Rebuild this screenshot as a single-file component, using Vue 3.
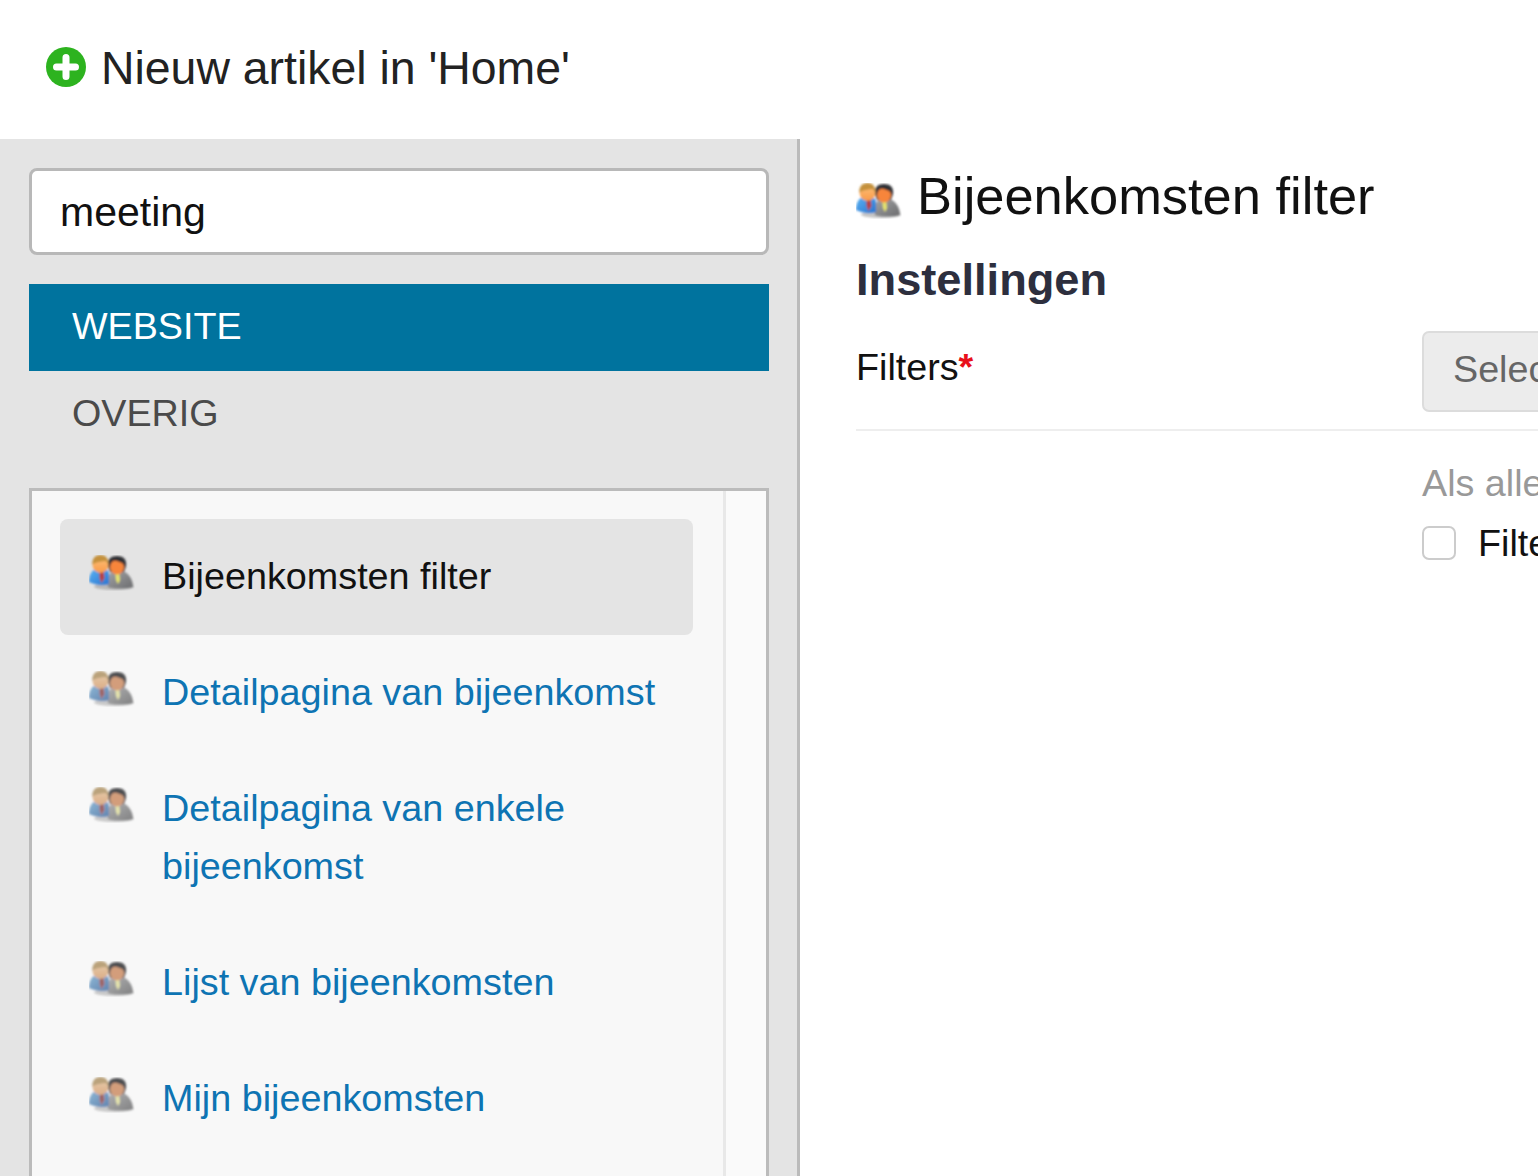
<template>
  <div class="page">
    <svg class="defs" aria-hidden="true">
      <defs>
        <filter id="soft" x="-20%" y="-20%" width="140%" height="140%"><feGaussianBlur stdDeviation="0.9" /></filter>
        <linearGradient id="suit" x1="0" y1="0" x2="1" y2="1"><stop offset="0" stop-color="#a2a3a5" /><stop offset="1" stop-color="#6c6d6f" /></linearGradient>
        <linearGradient id="blue" x1="0" y1="0" x2="1" y2="1"><stop offset="0" stop-color="#5ab2f2" /><stop offset="1" stop-color="#2a74d0" /></linearGradient>
        <linearGradient id="faceA" x1="0" y1="0" x2="0" y2="1"><stop offset="0" stop-color="#fdc27a" /><stop offset="1" stop-color="#f99a4a" /></linearGradient>
      </defs>
      <symbol id="people" viewBox="0 0 46 36">
        <g filter="url(#soft)">
          <ellipse cx="25" cy="31.500" rx="20" ry="3.500" fill="#8c8c8c" opacity=".5" />
          <path d="M19 32c-1-8 1-15 5-16h9c6 1 11 8 11 16-6 2-19 2-25 0z" fill="url(#suit)" />
          <path d="M26 16h4l1 9-2 4-2-4z" fill="#e6e36c" />
          <path d="M19 11C18 4 22 1 28 1s10 3 9 10l-2 6H21z" fill="#35363a" />
          <ellipse cx="28" cy="12" rx="7" ry="7.500" fill="#f7853a" />
          <path d="M21 10c1-3 3-5 7-4 2 1 5 1 7 4 0-4-3-7-7-7s-7 3-7 7z" fill="#2c2d31" />
          <path d="M0 27c0-7 3-13 8-13h7c3 0 5 2 5 6v9c-6 2-14 1-20-2z" fill="url(#blue)" />
          <path d="M10.500 15h4l1 8-3 5-2-5z" fill="#b8403f" />
          <ellipse cx="11.500" cy="9.500" rx="8" ry="8.500" fill="url(#faceA)" />
          <path d="M3.500 10C2.500 4 6 0 11.500 0S20 4 19.500 10c-1-2-2-4-4-4-4 1-8 1-9.500 2-1 .5-2 1-2.500 2z" fill="#c4913c" />
        </g>
      </symbol>
    </svg>

    <header class="top">
      <svg class="plus" viewBox="0 0 40 40">
        <circle cx="20" cy="20" r="20" fill="#2db31f" />
        <path d="M20 10.500v19M10.500 20h19" stroke="#fff" stroke-width="7" stroke-linecap="round" />
      </svg>
      <h1>Nieuw artikel in 'Home'</h1>
    </header>

    <div class="body">
      <aside class="side">
        <input class="search" type="text" value="meeting" />
        <nav class="tabs">
          <div class="tab active">WEBSITE</div>
          <div class="tab">OVERIG</div>
        </nav>
        <div class="listbox">
          <ul class="list">
            <li v-for="item in items" :key="item.label" class="item" :class="{ current: item.current }">
              <svg class="icon"><use href="#people" /></svg>
              <span>{{ item.label }}</span>
            </li>
          </ul>
          <div class="track"></div>
        </div>
      </aside>

      <main class="main">
        <div class="title">
          <svg class="title-icon"><use href="#people" /></svg>
          <h2>Bijeenkomsten filter</h2>
        </div>
        <h3>Instellingen</h3>
        <div class="row field">
          <label>Filters<b>*</b></label>
          <button class="select" type="button">Selecteer filters</button>
        </div>
        <div class="row extra">
          <div></div>
          <div>
            <p class="hint">Als alle filters</p>
            <div class="check">
              <span class="box"></span>
              <span>Filter</span>
            </div>
          </div>
        </div>
      </main>
    </div>
  </div>
</template>

<script setup>
const items = [
  { label: 'Bijeenkomsten filter', current: true },
  { label: 'Detailpagina van bijeenkomst' },
  { label: 'Detailpagina van enkele bijeenkomst' },
  { label: 'Lijst van bijeenkomsten' },
  { label: 'Mijn bijeenkomsten' }
]
</script>

<style>
html, body { margin: 0; overflow: hidden; background: #fff; }
</style>

<style scoped>
.page {
  width: 1538px;
  height: 1176px;
  overflow: hidden;
  font-family: "Liberation Sans", Arial, sans-serif;
  color: #111;
}
.defs { position: absolute; width: 0; height: 0; }

.top {
  height: 139px;
  box-sizing: border-box;
  padding-left: 46px;
  display: flex;
  align-items: center;
  gap: 15px;
}
.plus { width: 40px; height: 40px; margin-top: -6px; }
h1 {
  margin: 0 0 4px;
  font-size: 46.4px;
  font-weight: 400;
  color: #222;
}

.body { display: flex; height: 1037px; }
.side {
  width: 800px;
  flex: none;
  box-sizing: border-box;
  background: #e4e4e4;
  border-right: 3px solid #bbb;
  padding: 29px 28px 0 29px;
}
.search {
  display: block;
  width: 740px;
  height: 87px;
  box-sizing: border-box;
  border: 3px solid #b8b8b8;
  border-radius: 8px;
  background: #fff;
  padding: 1px 28px 0;
  font: 41px "Liberation Sans", Arial, sans-serif;
  color: #111;
  outline: none;
}
.tabs { margin-top: 29px; }
.tab {
  height: 87px;
  line-height: 84px;
  padding-left: 43px;
  font-size: 37.7px;
  color: #4a4a4a;
}
.tab.active { background: #00739e; color: #fff; }

.listbox {
  margin-top: 30px;
  width: 740px;
  height: 700px;
  box-sizing: border-box;
  border: 3px solid #bbb;
  background: #f8f8f8;
  display: flex;
}
.list {
  list-style: none;
  margin: 0;
  padding: 28px 30px 0 28px;
  width: 691px;
  box-sizing: border-box;
  flex: none;
}
.item {
  display: flex;
  padding: 28px 29px 30px;
  border-radius: 8px;
  font-size: 37.75px;
  line-height: 58px;
  color: #0e74b3;
}
.item.current { background: #e4e4e4; color: #111; }
.icon {
  width: 46px;
  height: 36px;
  flex: none;
  margin: 8px 27px 0 0;
  filter: saturate(.55) opacity(.85);
}
.item.current .icon { filter: none; }
.track {
  flex: 1;
  border-left: 3px solid #e8e8e8;
  background: #fafafa;
}

.main {
  flex: 1;
  min-width: 0;
  overflow: hidden;
  padding: 26px 0 0 56px;
}
.title { display: flex; align-items: center; gap: 15px; }
.title-icon { width: 46px; height: 36px; flex: none; margin-top: 10px; }
h2 { margin: 0; font-size: 52.45px; font-weight: 400; line-height: 62px; }
h3 { margin: 28px 0 0; font-size: 45.2px; line-height: 50px; color: #2d2f3e; }
.row {
  display: grid;
  grid-template-columns: 566px 1fr;
  white-space: nowrap;
}
.field {
  margin-top: 26px;
  padding-bottom: 17px;
  border-bottom: 2px solid #eee;
  font-size: 37.7px;
}
.field label { line-height: 72px; }
.field b { color: #e8101a; font-weight: 700; }
.select {
  width: 400px;
  height: 81px;
  box-sizing: border-box;
  border: 2px solid #dcdcdc;
  border-radius: 7px;
  background: #ececec;
  padding: 0 29px 4px;
  text-align: left;
  font: 37.7px "Liberation Sans", Arial, sans-serif;
  color: #666;
}
.extra { margin-top: 30px; font-size: 37.7px; }
.hint { margin: 0; line-height: 44px; color: #999; }
.check {
  margin-top: 16px;
  display: flex;
  align-items: center;
  gap: 22px;
  line-height: 44px;
}
.box {
  width: 34px;
  height: 34px;
  box-sizing: border-box;
  border: 2px solid #ccc;
  border-radius: 7px;
  background: #fff;
}
</style>
